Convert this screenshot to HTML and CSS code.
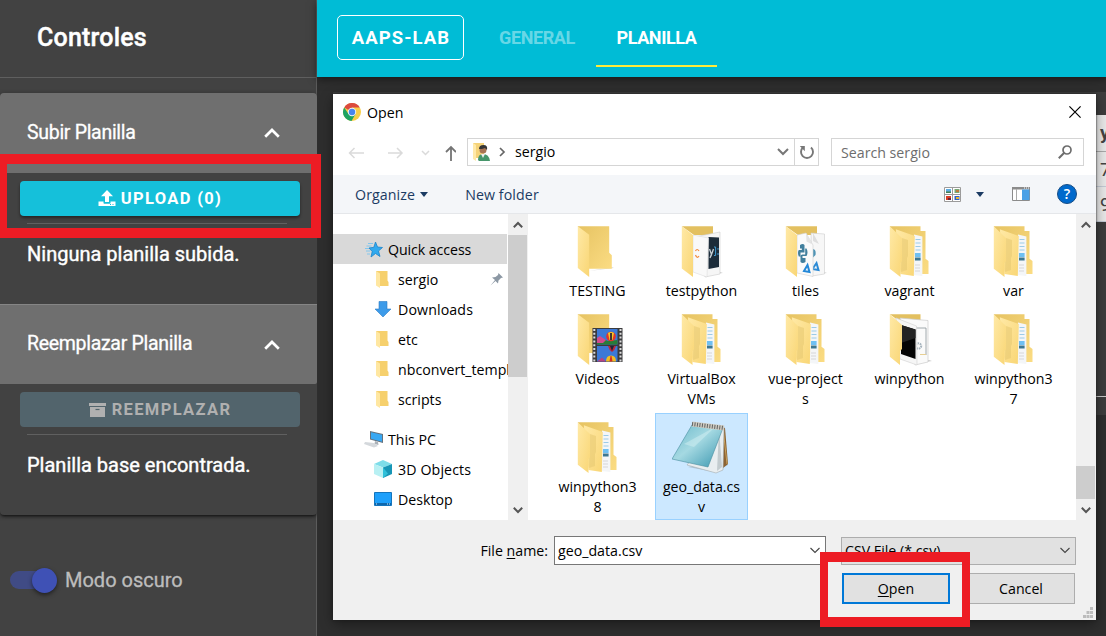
FILE: index.html
```
<!DOCTYPE html>
<html lang="es">
<head>
<meta charset="utf-8">
<title>AAPS-LAB</title>
<link rel="stylesheet" href="styles.css">
</head>
<body>
<svg class="defs" aria-hidden="true">
  <defs>
    <linearGradient id="flap" x1="0" y1="0" x2="1" y2="1"><stop offset="0" stop-color="#ffe9a6"/><stop offset="1" stop-color="#f9d675"/></linearGradient>
    <linearGradient id="back" x1="0" y1="0" x2="1" y2="1"><stop offset="0" stop-color="#e6c362"/><stop offset="1" stop-color="#fbdc83"/></linearGradient>
    <linearGradient id="pad" x1="0" y1="0" x2="1" y2="1"><stop offset="0" stop-color="#69b8c9"/><stop offset=".45" stop-color="#a5d9e2"/><stop offset="1" stop-color="#3795ae"/></linearGradient>
    <symbol id="folder" viewBox="0 0 56 54">
      <path d="M19 46l25-3-2-1z" fill="#ddd"/>
      <path d="M7.8 1.3H39.2V27.7L41.8 30.3V43.7H19z" fill="url(#back)"/>
      <path d="M7.8 1.3L19.2 9.7V52L7.8 43z" fill="url(#flap)"/>
    </symbol>
    <symbol id="docs" viewBox="0 0 56 54">
      <path d="M7.8 1.3H38.5V6H43.5V33.7L46.5 36V49H30z" fill="url(#back)"/>
      <path d="M32 9.5L40.4 11.5V51L31 50z" fill="#f4f6f8"/>
      <path d="M33.500 14.500h5M33.500 18h5M33.500 21.500h5M33.500 25h5" stroke="#9ccbe8" stroke-width="1.100"/>
      <path d="M33 28h5.600v4H33z" fill="#6fc0f2"/><path d="M33 32.500h5.600v3H33z" fill="#3c7791"/>
      <path d="M33 40h5M33 43h5M33 46h5" stroke="#cfcfcf" stroke-width=".8"/>
      <path d="M13.8 4.3L32.8 11L31.8 51L18.5 49z" fill="url(#flap)"/>
      <path d="M20 13l6 2v16l-1 2v12l-6 2z" fill="#e8ca73" opacity=".6"/>
      <path d="M7.8 1.3L20 13V36L18.5 38V52L7.8 43.7z" fill="url(#flap)"/>
    </symbol>
    <symbol id="testpy" viewBox="0 0 56 54">
      <path d="M7.8 1.3H39V10H20z" fill="#e3c060"/>
      <path d="M30 50l19-2-3-1z" fill="#ccc"/>
      <path d="M20 12L46 7V49L31 52z" fill="#f6f6f6" stroke="#ccc" stroke-width=".6"/>
      <path d="M34.5 12L45 12.500V42L34.500 44z" fill="#1c2c3a"/>
      <path d="M35.500 24l2 5.500 2-5.500M37.500 29l-1.500 4" stroke="#c9d1d6" stroke-width="1.300" fill="none"/>
      <path d="M40 22h1.600v8.500H40M44 23v1.800M44 28v2" stroke="#3f99cf" stroke-width="1" fill="none"/>
      <path d="M19 10L34.500 13 33 52l-14-5z" fill="#f9f9f9" stroke="#d6d6d6" stroke-width=".5"/>
      <path d="M21.500 26q1.500-3 3.500 0M21.500 30q1.500 4 3.500 1" stroke="#f28a3c" stroke-width="1.200" fill="none"/>
      <path d="M7.800 1.300L19 10V52L7.800 43.500z" fill="url(#flap)"/>
    </symbol>
    <symbol id="tiles" viewBox="0 0 56 54">
      <path d="M7.800 1.300H39V10H20z" fill="#e3c060"/>
      <path d="M30 50l19-2-3-1z" fill="#ccc"/>
      <path d="M33 8l13.500 1V49L34 51z" fill="#f7f7f7" stroke="#ccc" stroke-width=".6"/>
      <path d="M35 8l6 11-6-3z" fill="#dedede"/>
      <path d="M34.500 24q4 0 3 6l-3 3z" fill="#4f94b5"/>
      <path d="M34.500 44l4-6 2 7z" fill="none" stroke="#2c8bd6" stroke-width="2"/>
      <path d="M19 10l9-2 7 12V51.500L19 48z" fill="#fafafa" stroke="#d0d0d0" stroke-width=".6"/>
      <path d="M28 8l6.500 11.500-6-3z" fill="#e3e3e3"/>
      <path d="M22 20q3-2 4.500 0v7.500H22.500v4h-1.700q-1.600-4 0-6.500h3v-1.500H22zM27.200 23.500h1.300q2 4 0 7.500h-4v2h3v4q-3 2-5 0v-5.500q0-2 2-2h2.700z" fill="#417f9d"/>
      <path d="M26 46l3.500-6 2 7z" fill="none" stroke="#2388d8" stroke-width="2"/>
      <path d="M7.800 1.300L19 10V52L7.800 43.500z" fill="url(#flap)"/>
    </symbol>
    <symbol id="video" viewBox="0 0 56 54">
      <path d="M7.800 1.300H39.200V40H19z" fill="url(#back)"/>
      <path d="M7.800 1.300L19.200 9.700V52L7.800 43z" fill="url(#flap)"/>
      <path d="M22.500 15h30v34h-30z" fill="#3b3b3d"/>
      <path d="M24.300 16v33M50.500 16v33" stroke="#ddd" stroke-width="2" stroke-dasharray="2 1.800"/>
      <path d="M27 16h20.500v15.500H27zM27 33h20.500v15.500H27z" fill="#3c79d6"/>
      <path d="M27 28l6-2 5 2 9.500-1v4.500H27z" fill="#287d38"/><path d="M27 25l3-2 6 4-3 3h-6z" fill="#d34a8e"/>
      <circle cx="41" cy="23.500" r="4.800" fill="#e3342c"/><path d="M38 20q3-2 6 0l-1.500 7h-3z" fill="#f5c928"/><path d="M40 20h2v7h-2z" fill="#47352e"/>
      <path d="M38 33h8q-1 4-4 6-3-2-4-6z" fill="#c02639"/><path d="M40 33h4l-2 5z" fill="#232335"/>
      <path d="M36 48.500q0-6 5-6t5 6z" fill="#f2bd22"/><path d="M39.500 48.500l1-5.500h1l1 5.500z" fill="#d22d27"/><path d="M27 48.500l5-4 4 4z" fill="#b84480"/>
    </symbol>
    <symbol id="winpy" viewBox="0 0 56 54">
      <path d="M7.800 1.300H38.500V10H20z" fill="#e3c060"/>
      <path d="M32 51l18-3-3-1z" fill="#ccc"/>
      <path d="M18 5L46 7.500V49L33 52z" fill="#fafafa" stroke="#ccc" stroke-width=".7"/>
      <path d="M34 15h10v27" fill="none" stroke="#8b949b" stroke-width=".8"/><path d="M38 41.500h6" stroke="#e7cf93"/>
      <circle cx="36.500" cy="33" r="2.700" fill="none" stroke="#a5b3bd" stroke-width="2" stroke-dasharray="1.500 .8"/>
      <path d="M14 5L34.500 13 35 52 18 46z" fill="#f6f6f6" stroke="#d5d5d5" stroke-width=".7"/>
      <path d="M19 12l14.500 4.500V46L19 41z" fill="#050505"/><path d="M19 12l14.500 4.500V25L19 30z" fill="#242424"/>
      <path d="M7.800 1.300L20 12V36L18 38V52L7.800 43.700z" fill="url(#flap)"/>
    </symbol>
    <symbol id="notepad" viewBox="0 0 60 54">
      <path d="M16 46l38-8 2 6-14 7z" fill="#879aa5" opacity=".45"/>
      <path d="M50 6l3 1 3 36-5 4z" fill="#8c6332"/><path d="M51 7l4 36" stroke="#c8a15d"/>
      <path d="M47 4l5 3-1 42-7 3-29-8z" fill="#e9eef0" stroke="#a5adb0" stroke-width=".6"/>
      <path d="M47 8l3 38-5 4z" fill="#c3cccf"/>
      <path d="M20 4l31 3-15 39L0 38z" fill="url(#pad)" stroke="#488da0" stroke-width=".6"/>
      <path d="M12 23L43 6 22 26z" fill="#d6f1f4" opacity=".45"/>
      <path d="M20 3l32 4" stroke="#cfcac0" stroke-width="5"/><path d="M20 3l32 4" stroke="#5f6362" stroke-width="4" stroke-dasharray="1 1.500"/>
    </symbol>
    <symbol id="mini" viewBox="0 0 16 18">
      <path d="M1 1h11.500v9.500l1 1.500v4H4z" fill="#f6d06d"/><path d="M1 1l4 2.500V18l-4-2.500z" fill="#ffe7a1"/>
    </symbol>
    <symbol id="up" viewBox="0 0 10 8"><path d="M.8 6.200L5 2l4.200 4.200" fill="none" stroke="#555" stroke-width="2"/></symbol>
    <symbol id="down" viewBox="0 0 10 8"><path d="M.8 1.800L5 6l4.200-4.200" fill="none" stroke="#555" stroke-width="2"/></symbol>
    <symbol id="thin" viewBox="0 0 10 7"><path d="M.5 1L5 5.500 9.500 1" fill="none" stroke="#444" stroke-width="1.100"/></symbol>
  </defs>
</svg>

<div class="app">
  <aside class="sidebar">
    <h1 class="side-title">Controles</h1>
    <div class="panels">
      <section class="panel">
        <div class="panel-head"><span>Subir Planilla</span><svg width="16" height="10" viewBox="0 0 16 10"><path d="M1.200 8.800L8 2l6.800 6.800" fill="none" stroke="#fff" stroke-width="2.700"/></svg></div>
        <div class="panel-body">
          <button class="btn btn-upload"><svg width="18" height="17" viewBox="0 0 18 17"><path fill="#fff" d="M9 0l6 6.200h-4V12H7V6.200H3zM.500 11.500H5.500v1.500q0 .8.800.8h5.400q.8 0 .8-.8v-1.500h5V16H.5z"/><path d="M12 14.500h1M14.500 14.500h1" stroke="#15c0da"/></svg><span>UPLOAD (0)</span></button>
          <hr>
          <p>Ninguna planilla subida.</p>
        </div>
      </section>
      <section class="panel second">
        <div class="panel-head"><span>Reemplazar Planilla</span><svg width="16" height="10" viewBox="0 0 16 10"><path d="M1.200 8.800L8 2l6.800 6.800" fill="none" stroke="#fff" stroke-width="2.700"/></svg></div>
        <div class="panel-body">
          <button class="btn btn-replace"><svg width="17" height="14" viewBox="0 0 17 14"><path fill="#b0b0b0" d="M0 0h17v3H0zM1 4h15v10H1z"/><path d="M6.500 6.500h4" stroke="#52646c" stroke-width="1.200"/></svg><span>REEMPLAZAR</span></button>
          <hr>
          <p>Planilla base encontrada.</p>
        </div>
      </section>
    </div>
    <label class="mode"><span class="switch"><i></i></span><span>Modo oscuro</span></label>
  </aside>
  <main class="main">
    <header class="bar"><span class="brand">AAPS-LAB</span><nav class="tabs"><span class="tab off">GENERAL</span><span class="tab on">PLANILLA</span></nav></header>
    <div class="sheet">
      <div class="cell head">y</div><div class="cell">7</div><div class="cell last">9</div>
      <div class="sheet-rest"></div><div class="sheet-foot"></div>
    </div>
  </main>
</div>

<div class="dialog">
  <div class="titlebar">
    <svg width="18" height="18" viewBox="0 0 18 18"><circle cx="9" cy="9" r="9" fill="#f9cf48"/><path d="M9 9L1.200 4.500A9 9 0 0 1 16.800 4.500H9z" fill="#dc4b3e"/><path d="M1.200 4.500A9 9 0 0 0 8.500 18L12.500 11 9 9 5.500 11z" fill="#1da362"/><circle cx="9" cy="9" r="4.200" fill="#f3f3f3"/><circle cx="9" cy="9" r="3.200" fill="#4986ee"/></svg>
    <span>Open</span>
    <svg class="close" width="12" height="12" viewBox="0 0 12 12"><path d="M.4.400l11.200 11.200M11.600.400L.400 11.600" stroke="#000" stroke-width="1.200"/></svg>
  </div>
  <div class="address">
    <svg class="nav" width="108" height="18" viewBox="0 0 108 18"><g fill="none" stroke="#dadada" stroke-width="1.500"><path d="M16 9H1.500M6.500 4L1.500 9l5 5M40 9h14M49 4l5 5-5 5"/><path d="M74 7l3.500 3.500L81 7"/></g><path d="M103 17V3M98 8l5-5 5 5" fill="none" stroke="#747474" stroke-width="1.800"/></svg>
    <div class="path">
      <svg width="17" height="18" viewBox="0 0 17 18"><path d="M0 0h11v15H3z" fill="#f5d379"/><path d="M0 0l3 2v16l-3-2z" fill="#ffe9a9"/><path d="M5 17q0-6 5-6 6 0 7 7H6z" fill="#47966b"/><path d="M8 11h4l-2 4z" fill="#eee"/><circle cx="10" cy="7" r="3.500" fill="#a87454"/><path d="M6 6q0-4 4.500-4T14 7l-2-2-3 1z" fill="#343536"/></svg>
      <svg width="7" height="10" viewBox="0 0 7 10"><path d="M1 1l4 4-4 4" fill="none" stroke="#666" stroke-width="1.700"/></svg>
      <span class="here">sergio</span>
      <svg class="drop" width="12" height="8" viewBox="0 0 12 8"><path d="M1 1l5 5 5-5" fill="none" stroke="#777" stroke-width="2"/></svg>
      <span class="refresh"><svg width="16" height="16" viewBox="0 0 16 16"><path d="M4 3.500a6 6 0 1 0 8 0" fill="none" stroke="#777" stroke-width="1.900"/><path d="M5.800 2v5.200L.8 2z" fill="#777"/></svg></span>
    </div>
    <div class="search"><span>Search sergio</span><svg width="14" height="14" viewBox="0 0 14 14"><circle cx="9" cy="5" r="4" fill="none" stroke="#6d6d6d" stroke-width="1.700"/><path d="M6 8L.8 13.200" stroke="#6d6d6d" stroke-width="2"/></svg></div>
  </div>
  <div class="tools">
    <span class="organize">Organize</span><svg class="tri" width="8" height="5" viewBox="0 0 8 5"><path d="M0 0h8L4 5z" fill="#1b3b63"/></svg>
    <span class="new-folder">New folder</span>
    <svg class="views" width="17" height="15" viewBox="0 0 17 15"><path d="M.5.500h16v14H.5zM8.500 0v15M0 7.500h17" fill="#fff" stroke="#9b9b9b"/><path d="M2 2h5v4H2z" fill="#5cace2"/><path d="M2 4.500h5V6H2z" fill="#438055"/><path d="M10.500 2h5v4h-5z" fill="#77a875"/><path d="M12 3h3v2h-3z" fill="#bd793b"/><path d="M2 9h5v4H2z" fill="#d93c26"/><path d="M4 11h3v2H4z" fill="#64243b"/><path d="M10.500 9h5v4h-5z" fill="#2c61cc"/><path d="M12 10h3v2h-3z" fill="#e6b430"/></svg>
    <svg class="tri2" width="8" height="5" viewBox="0 0 8 5"><path d="M0 0h8L4 5z" fill="#1b3b63"/></svg>
    <svg class="pane" width="18" height="14" viewBox="0 0 18 14"><path d="M.500.500h17v13H.500z" fill="#fff" stroke="#8b8b8b"/><path d="M0 0h18v2.500H0z" fill="#8b8b8b"/><path d="M4.500 2v11" stroke="#aaa"/><path d="M10 2.500h7.500V13H10z" fill="#4ba1e6"/><path d="M12 1h5" stroke="#fff" stroke-dasharray="1 1"/></svg>
    <span class="help">?</span>
  </div>
  <div class="body">
    <div class="tree">
      <div class="node root sel"><svg width="18" height="17" viewBox="0 0 18 17"><path d="M10.500 1l2 5 5 .5-4 3.500 1.500 5.500-4.500-3L6 16l1.200-5.500L4 7l4.800-.7z" fill="#31a9ee" stroke="#1c83c9" stroke-width=".8"/><path d="M3 2.500h5M1.500 5h5M0 7.500h4M1 10h4M2 13h3" stroke="#78c4ef" stroke-width=".9"/></svg><span>Quick access</span></div>
      <div class="node"><svg width="16" height="18"><use href="#mini"/></svg><span>sergio</span><svg class="pin" width="13" height="13" viewBox="0 0 13 13"><path d="M8.500 0L13 4.500l-2 .5-2.500 2.500L8 10.500 5.500 8 .5 12.500 5 7 2 4.500 5.500 4 8 2z" fill="#8c98a4"/></svg></div>
      <div class="node"><svg width="16" height="18" viewBox="0 0 16 18"><path d="M4 1.500h8V9h4l-8 8L0 9h4z" fill="#3d9be9" stroke="#2b7cc6" stroke-width=".6"/></svg><span class="downloads">Downloads</span></div>
      <div class="node"><svg width="16" height="18"><use href="#mini"/></svg><span>etc</span></div>
      <div class="node"><svg width="16" height="18"><use href="#mini"/></svg><span>nbconvert_templates</span></div>
      <div class="node"><svg width="16" height="18"><use href="#mini"/></svg><span>scripts</span></div>
      <div class="node root pc"><svg width="20" height="18" viewBox="0 0 20 18"><path d="M6 1l13 3v9L6 9.500z" fill="#65717c"/><path d="M7 2.200l11 2.600v7L7 8.800z" fill="#38a8f3"/><path d="M11 11l3 1 .5 3-4-1z" fill="#aab1b8"/><path d="M1 12l9 1 4 3-4 1.500L0 14z" fill="#d4d8dc"/></svg><span>This PC</span></div>
      <div class="node wide"><svg width="18" height="18" viewBox="0 0 18 18"><path d="M9 0l9 4-9 3.500L0 4z" fill="#7ddde9"/><path d="M0 4l9 3.500V18l-9-4z" fill="#b8f0f3"/><path d="M18 4L9 7.500V18l9-4z" fill="#1796b6"/><path d="M9 7.500l5 6L9 18z" fill="#2fc0d9"/></svg><span class="objects">3D Objects</span></div>
      <div class="node wide"><svg width="18" height="14" viewBox="0 0 18 14"><path d="M.5.500h17v13H.5z" fill="#1ea0fb" stroke="#1475bd"/><path d="M1 12h16" stroke="#0a5592" stroke-width="1.500"/><path d="M2 12h2M13 12h3" stroke="#cce8fb" stroke-dasharray="1 1"/></svg><span>Desktop</span></div>
    </div>
    <div class="scroll"><svg width="10" height="8"><use href="#up"/></svg><div class="thumb t-left"></div><svg class="sd" width="10" height="8"><use href="#down"/></svg></div>
    <div class="files">
      <div class="file"><svg><use href="#folder"/></svg><span>TESTING</span></div>
      <div class="file"><svg><use href="#testpy"/></svg><span>testpython</span></div>
      <div class="file"><svg><use href="#tiles"/></svg><span>tiles</span></div>
      <div class="file"><svg><use href="#docs"/></svg><span>vagrant</span></div>
      <div class="file"><svg><use href="#docs"/></svg><span>var</span></div>
      <div class="file"><svg><use href="#video"/></svg><span>Videos</span></div>
      <div class="file"><svg><use href="#docs"/></svg><span>VirtualBox<br>VMs</span></div>
      <div class="file"><svg><use href="#docs"/></svg><span>vue-project<br>s</span></div>
      <div class="file"><svg><use href="#winpy"/></svg><span>winpython</span></div>
      <div class="file"><svg><use href="#docs"/></svg><span>winpython3<br>7</span></div>
      <div class="file"><svg><use href="#docs"/></svg><span>winpython3<br>8</span></div>
      <div class="file picked"><svg class="note"><use href="#notepad"/></svg><span>geo_data.cs<br>v</span></div>
    </div>
    <div class="scroll"><svg width="10" height="8"><use href="#up"/></svg><div class="thumb t-right"></div><svg class="sd" width="10" height="8"><use href="#down"/></svg></div>
  </div>
  <div class="foot">
    <div class="name-row"><span>File <u>n</u>ame:</span>
      <div class="field"><span>geo_data.csv</span><svg width="10" height="7"><use href="#thin"/></svg></div>
      <div class="select"><span>CSV File (*.csv)</span><svg width="10" height="7"><use href="#thin"/></svg></div>
    </div>
    <div class="actions"><button class="dbtn primary"><span><u>O</u>pen</span></button><button class="dbtn">Cancel</button></div>
    <svg class="grip" width="10" height="11" viewBox="0 0 10 11"><path d="M7 0h3v3H7zM3.500 4h3v3h-3zM7 4h3v3H7zM0 8h3v3H0zM3.500 8h3v3h-3zM7 8h3v3H7z" fill="#bcbcbc"/></svg>
  </div>
</div>
<div class="mark mark-upload"></div>
<div class="mark mark-open"></div>
</body>
</html>
```
FILE: styles.css
```
* { box-sizing: border-box; }
body { margin: 0; width: 1106px; height: 636px; overflow: hidden; position: relative; font-family: Roboto, sans-serif; background: #2e2e2e; color: #fff; }
svg { display: block; flex: none; }
button { font: inherit; margin: 0; }
.defs { position: absolute; width: 0; height: 0; }
.app { display: flex; height: 636px; }

.sidebar { width: 317px; flex: none; background: #424242; border-right: 1px solid #5c5c5c; }
.side-title { margin: 0; height: 78px; padding: 0 0 2px 37px; border-bottom: 1px solid #5f5f5f; display: flex; align-items: center; font-size: 25px; font-weight: 500; letter-spacing: .2px; -webkit-text-stroke: .4px; }
.panels { margin-top: 15px; width: 317px; border-radius: 4px; background: #424242; box-shadow: 0 2px 3px -1px #111, 0 1px 5px rgba(0,0,0,.3); }
.panel { height: 211px; }
.panel-head { height: 80px; background: #6f6f6f; border-radius: 4px 4px 0 0; padding: 0 37px 0 27px; display: flex; align-items: center; justify-content: space-between; font-size: 19.5px; letter-spacing: -.3px; -webkit-text-stroke: .3px; }
.panel-head span { padding-bottom: 2px; }
.second .panel-head { border-top: 1px solid #858585; border-radius: 0 0 2px 0; }
.second .panel-head span { padding-bottom: 3px; }
.panel-body { padding: 8px 17px 0 20px; }
.btn { width: 280px; height: 35px; border: 0; border-radius: 4px; padding: 0; display: flex; align-items: center; justify-content: center; gap: 5px; color: #fff; font-size: 16.5px; font-weight: 700; letter-spacing: 1.35px; }
.btn span { padding-bottom: 1px; }
.btn-upload { background: #15c0da; box-shadow: 0 2px 3px rgba(0,0,0,.45); }
.btn-replace { background: #52646c; color: #b0b0b0; gap: 6px; }
.panel hr { height: 1px; border: 0; background: #606060; margin: 7px 13px 0 7px; }
.panel p { margin: 18px 0 0 7px; font-size: 20px; line-height: 24px; -webkit-text-stroke: .4px; }
.mode { margin-top: 52px; height: 26px; padding-left: 10px; display: flex; align-items: center; gap: 8px; font-size: 20px; color: #bdbdbd; -webkit-text-stroke: .3px; }
.switch { width: 47px; height: 18px; border-radius: 9px; background: linear-gradient(90deg, #404b85 0 60%, transparent 60%); display: flex; align-items: center; justify-content: flex-end; }
.switch i { width: 25px; height: 25px; border-radius: 50%; background: #3f51b5; box-shadow: 0 2px 4px rgba(0,0,0,.5); }

.main { flex: 1; min-width: 0; background: #2e2e2e; }
.bar { height: 77px; background: #00bcd6; display: flex; padding-left: 20px; box-shadow: 0 2px 8px rgba(0,0,0,.5); }
.brand { width: 127px; height: 45px; margin-top: 15px; border: 1px solid #fff; border-radius: 5px; display: flex; align-items: center; justify-content: center; padding-left: 1px; font-size: 18.5px; font-weight: 700; letter-spacing: 1.05px; }
.tabs { display: flex; margin-left: 11px; font-size: 18px; font-weight: 700; letter-spacing: -.4px; }
.tab { height: 67px; width: 121px; padding-top: 9px; display: flex; align-items: center; justify-content: center; }
.off { color: rgba(255,255,255,.42); padding: 7px 0 0 3px; }
.on { border-bottom: 2px solid #ffeb3b; }
.sheet { margin: 15px 0 0 16px; background: #3d3d3d; padding-top: 23px; height: 323px; color: #444; font-size: 19px; }
.cell { height: 35px; padding-left: 767px; background: #e9e9e9; border-bottom: 1px solid #c4cbd6; line-height: 35px; white-space: nowrap; overflow: hidden; }
.cell.head { height: 37px; font-weight: 700; border-color: #aaa; }
.sheet-rest { height: 175px; border-bottom: 1px solid #ccc; }
.sheet-foot { height: 18px; }

.dialog { position: absolute; left: 333px; top: 94px; width: 763px; height: 526px; background: #fff; color: #000; font: 14.2px "Open Sans", sans-serif; box-shadow: 0 4px 12px rgba(0,0,0,.4), 0 0 2px #222; }
.dialog span { white-space: nowrap; }
.titlebar { height: 44px; padding: 0 15px 8px 10px; display: flex; align-items: center; gap: 6px; }
.close { margin-left: auto; }
.address { height: 28px; display: flex; align-items: center; padding-left: 15px; }
.nav { margin-top: 2px; }
.path { width: 352px; height: 28px; margin-left: 11px; border: 1px solid #d5d5d5; display: flex; align-items: center; padding-left: 5px; }
.path svg + svg { margin-left: 9px; }
.here { margin-left: 9px; padding-bottom: 1px; }
.path .drop { margin-left: auto; margin-right: 5px; }
.refresh { height: 26px; width: 24px; border-left: 1px solid #d5d5d5; display: flex; align-items: center; justify-content: center; }
.search { width: 253px; height: 28px; margin-left: 12px; border: 1px solid #d5d5d5; padding: 0 11px 0 9px; display: flex; align-items: center; justify-content: space-between; color: #6d6d6d; }
.tools { height: 39px; margin-top: 9px; background: #f4f6f9; border-bottom: 1px solid #e5e7ea; display: flex; align-items: center; padding: 0 19px 0 22px; color: #1b3b63; }
.organize { letter-spacing: .1px; }
.tri { margin-left: 5px; }
.new-folder { margin-left: 37px; letter-spacing: .1px; }
.views { margin-left: auto; }
.tri2 { margin-left: 15px; }
.pane { margin-left: 28px; }
.help { width: 20px; height: 20px; margin-left: 27px; border-radius: 50%; background: #0069cc; border: 1px solid #174d86; color: #fff; font-weight: 600; line-height: 18px; text-align: center; }
.body { height: 306px; display: flex; }
.tree { width: 175px; padding-top: 20px; overflow: hidden; }
.node { height: 30px; display: flex; align-items: center; padding-left: 42px; gap: 7px; }
.node.root { padding-left: 32px; gap: 5px; }
.node.sel { background: #d9d9d9; margin-right: 1px; letter-spacing: -.08px; }
.node.pc { margin-top: 10px; padding-left: 31px; gap: 4px; }
.node.wide { padding-left: 41px; gap: 6px; }
.downloads, .objects { letter-spacing: .12px; }
.pin { margin-left: auto; margin-right: 5px; }
.scroll { width: 20px; flex: none; background: #f0f0f0; display: flex; flex-direction: column; align-items: center; padding: 7px 0 6px; }
.thumb { width: 19px; background: #cdcdcd; align-self: flex-start; }
.t-left { height: 142px; margin-top: 6px; }
.t-right { height: 33px; margin-top: 237px; }
.sd { margin-top: auto; }
.files { flex: 1; border-left: 1px solid #fff; padding: 3px 0 0 22px; display: grid; grid-template-columns: repeat(5, 93px); column-gap: 11px; grid-template-rows: 88px 108px 107px; }
.file { display: flex; flex-direction: column; align-items: center; padding-top: 8px; line-height: 20px; text-align: center; }
.file > svg { width: 56px; height: 54px; margin-bottom: 2px; }
.file.picked { background: #cce8ff; border: 1px solid #99d1ff; padding-top: 7px; }
.file > .note { width: 60px; }
.foot { height: 100px; background: #f0f0f0; padding: 16px 20px 0 0; position: relative; }
.name-row { display: flex; height: 29px; justify-content: flex-end; align-items: center; }
.field, .select { height: 29px; display: flex; align-items: center; justify-content: space-between; }
.field { width: 272px; margin-left: 6px; border: 1px solid #777; background: #fff; padding: 0 5px 0 3px; }
.select { width: 235px; height: 28px; margin-left: 15px; border: 1px solid #adadad; background: #e1e1e1; padding: 0 5px 0 3px; }
.actions { display: flex; justify-content: flex-end; gap: 16px; margin-top: 8px; padding-right: 1px; }
.dbtn { width: 108px; height: 31px; border: 1px solid #adadad; background: #e1e1e1; padding: 0; color: #000; }
.primary { border: 2px solid #0078d7; margin-right: 1px; }
u { text-underline-offset: 2px; }
.grip { position: absolute; right: 3px; bottom: 2px; }

.mark { position: absolute; border: 10px solid #ed1c24; }
.mark-upload { left: -3px; top: 154px; width: 324px; height: 84px; }
.mark-open { left: 820px; top: 552px; width: 150px; height: 75px; border-width: 10px 8px; }
```
